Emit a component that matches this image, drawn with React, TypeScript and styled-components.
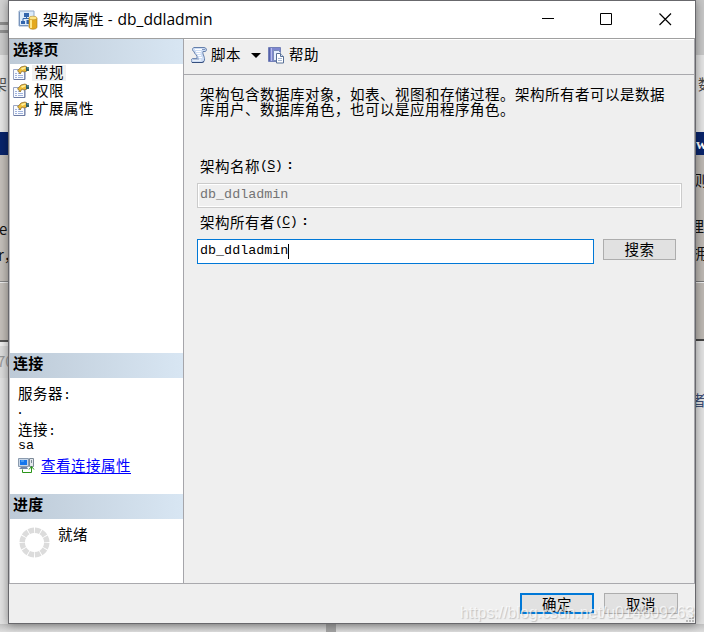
import React from 'react';
import styled, { createGlobalStyle } from 'styled-components';

const Global = createGlobalStyle`
  *{box-sizing:border-box}
  html,body{margin:0;padding:0;overflow:hidden}
  body{font:15px/18px "Liberation Mono","Noto Sans CJK SC",sans-serif;color:#000}
`;
const cjk = '"Noto Sans CJK SC",sans-serif';

const Desktop = styled.div`
  position:relative;width:704px;height:632px;overflow:hidden;background:#e7e7e7;
  display:grid;grid-template-columns:8px 688px 8px;grid-template-rows:624px 8px;
`;
const Edge = styled.div`display:flex;flex-direction:column;overflow:hidden;background:#e2e2e2;`;
const Band = styled.div<{ h: number; bg: string; shift?: number; top?: number; fg?: string }>`
  flex:none;height:${p => p.h}px;background:${p => p.bg};color:${p => p.fg || '#111'};
  font:15px/18px ${cjk};white-space:nowrap;overflow:hidden;
  padding-top:${p => p.top || 0}px;text-indent:${p => p.shift || 0}px;
`;
const BoldBand = styled(Band)`font:700 15px/18px "Liberation Serif",serif;`;
const Bottom = styled.div`
  grid-column:1 / 4;background:linear-gradient(#c4c4c4,#dedede);display:flex;padding-left:326px;
`;
const Divider = styled.div`width:10px;background:#a3a3a3;`;
const Window = styled.section`
  display:flex;flex-direction:column;border:1px solid #68686c;background:#efefef;
  box-shadow:0 1px 9px rgba(0,0,0,.42);z-index:1;
`;
const TitleBar = styled.header`
  height:38px;flex:none;background:#fff;border-bottom:1px solid #a0a0a0;display:flex;align-items:center;
  padding-left:9px;
`;
const Title = styled.h1`
  margin:0 0 2px 5px;font:400 15.2px/20px "Open Sans","Noto Sans CJK SC",sans-serif;flex:1;white-space:nowrap;
  span{font-size:15.6px;margin-left:1px}
`;
const Caption = styled.div`display:flex;width:176px;height:37px;`;
const CaptionButton = styled.button`
  border:0;background:none;padding:0;width:58.6px;display:flex;align-items:center;justify-content:center;
`;
const Body = styled.main`
  height:545px;flex:none;display:flex;border-bottom:1px solid #a9a9ad;
`;
const Side = styled.aside`
  width:175px;flex:none;background:#fff;border-right:1px solid #a5a5aa;border-left:1px solid #c0c0c4;
  display:flex;flex-direction:column;
`;
const SideTitle = styled.h2`
  height:25px;flex:none;margin:0;padding-left:3px;font:700 15px/20px ${cjk};letter-spacing:.3px;
  background:linear-gradient(90deg,#bdcad7,#d8e6f3);
`;
const Pages = styled.nav`height:289px;flex:none;padding:0 0 0 3px;`;
const PageItem = styled.div<{ active?: boolean }>`
  display:flex;align-items:center;height:18px;font:400 14.5px/14px ${cjk};letter-spacing:.5px;
  span{background:${p => (p.active ? '#f0f0f0' : 'transparent')};padding:0 2px;margin-left:3px;height:16px}
`;
const Connection = styled.div`
  height:116px;flex:none;padding:6px 0 0 8px;display:flex;flex-direction:column;
`;
const Line = styled.div<{ h?: number }>`
  height:${p => p.h || 18}px;font:13.4px/${p => p.h || 18}px "Liberation Mono",monospace;
  span{font:14.5px/18px ${cjk};letter-spacing:.5px}
`;
const Server = styled(Line)`margin-left:-2px;`;
const LinkRow = styled.div`display:flex;align-items:center;height:20px;margin-top:3px;`;
const Link = styled.a`
  margin:-3px 0 0 6px;color:#00f;font:14.5px/18px ${cjk};letter-spacing:.5px;
  text-decoration:underline;text-underline-offset:2px;text-decoration-thickness:1px;
`;
const Progress = styled.div`
  display:flex;padding:6px 0 0 9px;font:14.5px/17px ${cjk};letter-spacing:.5px;gap:8px;
  svg{margin-top:2px}
`;
const Content = styled.div`flex:1;display:flex;flex-direction:column;border-right:1px solid #a5a5aa;`;
const Toolbar = styled.div`
  height:36px;flex:none;border-top:1px solid #fff;border-bottom:1px solid #a9a9ad;display:flex;align-items:center;
  padding:0 0 4px 7px;font:14.5px/18px ${cjk};letter-spacing:.5px;
`;
const ToolLabel = styled.span`margin:-2px 0 0 4px;`;
const Caret = styled.i`
  border:5px solid transparent;border-top-color:#000;border-bottom:0;margin:1px 7px 0 10px;
`;
const Form = styled.div`padding:11px 12px 0 13px;display:flex;flex-direction:column;`;
const Intro = styled.p`
  margin:0 0 0 3px;height:61px;font:14.5px/15px ${cjk};letter-spacing:.5px;white-space:nowrap;
`;
const Label = styled.div<{ h: number }>`
  display:flex;align-items:center;height:${p => p.h}px;padding:${p => (p.h > 31 ? 2 : 0)}px 0 ${p => (p.h > 31 ? 0 : 3)}px 3px;
  font:14.5px/18px ${cjk};letter-spacing:.5px;
  u{text-underline-offset:2px;text-decoration-thickness:1px}
  u,b,i{font:13.4px/18px "Liberation Mono",monospace;letter-spacing:-.7px}
  i{font-weight:700;margin-left:4px}
`;
const Field = styled.div<{ off?: boolean }>`
  height:25px;width:${p => (p.off ? '485px' : '397px')};
  border:1px solid ${p => (p.off ? '#cbcbcb' : '#0078d7')};
  box-shadow:${p => (p.off ? 'inset 0 0 0 1px #fff' : 'none')};
  background:${p => (p.off ? '#efefef' : '#fff')};color:${p => (p.off ? '#747474' : '#000')};
  display:flex;align-items:center;padding:0 0 1px 2px;
  font:13.4px/20px "Liberation Mono",monospace;
`;
const Cursor = styled.i`width:1px;height:15px;background:#000;`;
const OwnerRow = styled.div`display:flex;gap:9px;`;
const Button = styled.button<{ w: number; primary?: boolean }>`
  width:${p => p.w}px;height:21px;padding:0 0 1px;background:#e1e1e1;
  border:${p => (p.primary ? '2px solid #0078d7' : '1px solid #adadad')};
  font:14.5px/16px ${cjk};letter-spacing:.5px;color:#000;display:flex;align-items:center;justify-content:center;
`;
const Footer = styled.footer`
  flex:1;display:flex;gap:10px;justify-content:flex-end;padding:9px 17px 0 0;
  button{padding:1px 0 0}
`;
const Watermark = styled.div`
  position:absolute;z-index:3;left:460px;top:603px;font:15.85px/20px "Liberation Sans",sans-serif;white-space:nowrap;
  color:rgba(255,255,255,.7);text-shadow:1px 1px 1px rgba(120,120,120,.38);
`;
const Grip = styled.svg`position:absolute;z-index:2;left:685px;top:613px;`;

const AppIcon = () => (
  <svg width="20" height="20" viewBox="0 0 20 20">
    <path d="M1 1h15v15H1z" fill="#dcebfa" stroke="#91a9c8" />
    <path d="M1.500 2v13.500H10" stroke="#7894bc" fill="none" />
    <path d="M6 3h5v4H6zM3 11h4v3H3zM8.500 10h3v4h-3z" fill="#3265ad" />
    <path d="M8.500 7v2M5 11V8.500h6" stroke="#3265ad" fill="none" />
    <path d="M11 8v9c0 3 8 3 8 0V8z" fill="#e4a91e" stroke="#a67a1b" strokeWidth=".6" />
    <path d="M13 9v9" stroke="#ffe88a" strokeWidth="2" />
    <ellipse cx="15" cy="8" rx="4" ry="1.800" fill="#ffe688" stroke="#bd8e26" strokeWidth=".6" />
  </svg>
);
const PageIcon = () => (
  <svg width="16" height="16" viewBox="0 0 16 16">
    <path d="M.5 4.500h11v10H.5z" fill="#f9fbff" stroke="#9aa6c4" />
    <path d="M1 14.500h11V7" fill="none" stroke="#6d7ba3" />
    <path d="M2 8.500h2m1 0h3M2 10.500h2m1 0h5M2 12.500h2m1 0h5" stroke="#9fb2dc" />
    <path d="M4.500 6L8 2l4-1 2 1v4l-3 1-2-1-2 3-1-2z" fill="#eebc35" stroke="#8e7030" strokeWidth=".8" />
    <path d="M8 3l4-1 1 1-4 2z" fill="#fff09c" />
    <path d="M13 2h3v4h-3z" fill="#315f69" /><path d="M14 3h2" stroke="#75a5a8" />
  </svg>
);
const ScriptIcon = () => (
  <svg width="16" height="16" viewBox="0 0 16 16">
    <path d="M3 .5h10c3 0 3 4 1 4h-2c-1 3 3 6 1 10-1 1-2 1-3 1H2c-3 0-2-4 0-4h4C7 8 3 7 3 4.500 1 4 1 1 3 .5z" fill="#cfdef5" stroke="#647eaa" />
    <path d="M4 2.500h7M5 4.500h5M5.500 6.500h4M7 8.500h3M8 10.500h3M2 13h8" stroke="#fff" />
    <path d="M2 12h6M11 2.500h3" stroke="#7f96be" />
    <path d="M1 15.500h10l2-1" stroke="#344e7d" fill="none" />
  </svg>
);
const HelpIcon = () => (
  <svg width="17" height="17" viewBox="0 0 17 17">
    <path d="M.5.5h12v14H.5z" fill="#7d86cf" stroke="#7380b8" />
    <path d="M1.500 1v13" stroke="#5662aa" /><path d="M3.500 1v13" stroke="#b6bee9" />
    <path d="M5.500 3.500h5l2 2v8h-7z" fill="#e7efff" stroke="#7b8eb7" />
    <path d="M8.500 6.500h4l3 3v6.500h-7z" fill="#fff" stroke="#587096" />
    <path d="M12.500 6.500v3h3" fill="#d3def1" stroke="#587096" />
    <path d="M10 11.500h4m-4 2h4" stroke="#a6b7d3" />
  </svg>
);
const ConnectionIcon = () => (
  <svg width="17" height="17" viewBox="0 0 17 17">
    <path d="M.5.5h10v8H.5z" fill="#c9d7e8" stroke="#8b9bae" />
    <path d="M2 2h7v5H2z" fill="#1576ed" /><path d="M3 3h3" stroke="#76c0ff" />
    <path d="M3 9h6l1 2H1z" fill="#7187a8" />
    <path d="M11.500.5h4v8h-4z" fill="#e4e8ec" stroke="#7c8997" /><path d="M13.500 2v3" stroke="#7c8997" />
    <path d="M4.500 11.500v3h9V9M11 11.500l2.500-3 2.500 3" fill="none" stroke="#2a9519" />
  </svg>
);
const Spinner = () => (
  <svg width="31" height="31" viewBox="0 0 31 31">
    <circle cx="15.500" cy="15.500" r="12.300" fill="none" stroke="#dcdcdc" strokeWidth="5.400" pathLength="120" strokeDasharray="8.600 1.400" strokeDashoffset="-0.700" />
  </svg>
);

export default function App() {
  return (
    <Desktop>
      <Global />
      <Edge>
        <Band h={22} bg="#d2d2d2" /><Band h={3} bg="#8d8d8d" /><Band h={5} bg="#cecece" /><Band h={3} bg="#919191" />
        <Band h={22} bg="#cbcbcb" /><Band h={77} bg="#e6e6e6" top={20} shift={-8} fg="#555">架</Band>
        <Band h={23} bg="#09246b" />
        <Band h={65} bg="#c4bfba" /><Band h={26} bg="#c4bfba" shift={-1}>e</Band>
        <Band h={35} bg="#c4bfba" shift={-2}>r，</Band><Band h={1} bg="#888" />
        <Band h={1} bg="#eee" /><Band h={57} bg="#c4bfba" /><Band h={2} bg="#555" />
        <Band h={4} bg="#eee" /><Band h={32} bg="#dcdcdc" top={6} shift={-3} fg="#999">70</Band>
      </Edge>
      <Window>
        <TitleBar>
          <AppIcon /><Title>架构属性 - <span>db_ddladmin</span></Title>
          <Caption>
            <CaptionButton aria-label="最小化"><svg width="13" height="13"><path d="M0 5.500h12" stroke="#000" /></svg></CaptionButton>
            <CaptionButton aria-label="最大化"><svg width="13" height="13"><path d="M.5.5h11v11H.5z" stroke="#000" fill="none" /></svg></CaptionButton>
            <CaptionButton aria-label="关闭"><svg width="13" height="13"><path d="M.5.5L12 12m0-11.500L.5 12" stroke="#000" strokeWidth="1.200" /></svg></CaptionButton>
          </Caption>
        </TitleBar>
        <Body>
          <Side>
            <SideTitle>选择页</SideTitle>
            <Pages>
              <PageItem active><PageIcon /><span>常规</span></PageItem>
              <PageItem><PageIcon /><span>权限</span></PageItem>
              <PageItem><PageIcon /><span>扩展属性</span></PageItem>
            </Pages>
            <SideTitle>连接</SideTitle>
            <Connection>
              <Line><span>服务器</span>:</Line><Server>.</Server>
              <Line><span>连接</span>:</Line><Line h={15}>sa</Line>
              <LinkRow><ConnectionIcon /><Link>查看连接属性</Link></LinkRow>
            </Connection>
            <SideTitle>进度</SideTitle>
            <Progress><Spinner />就绪</Progress>
          </Side>
          <Content>
            <Toolbar>
              <ScriptIcon /><ToolLabel>脚本</ToolLabel><Caret /><HelpIcon /><ToolLabel>帮助</ToolLabel>
            </Toolbar>
            <Form>
              <Intro>架构包含数据库对象，如表、视图和存储过程。架构所有者可以是数据<br />库用户、数据库角色，也可以是应用程序角色。</Intro>
              <Label h={36}>架构名称<b>(</b><u>S</u><b>)</b><i>:</i></Label>
              <Field off>db_ddladmin</Field>
              <Label h={31}>架构所有者<b>(</b><u>C</u><b>)</b><i>:</i></Label>
              <OwnerRow><Field>db_ddladmin<Cursor /></Field><Button w={73}>搜索</Button></OwnerRow>
            </Form>
          </Content>
        </Body>
        <Footer><Button w={74} primary>确定</Button><Button w={74}>取消</Button></Footer>
      </Window>
      <Edge>
        <Band h={55} bg="#c7c7c7" /><Band h={77} bg="#e4e4e4" top={20} shift={2} fg="#444">数</Band>
        <BoldBand h={23} bg="#09246b" fg="#fff" top={3}>w</BoldBand>
        <Band h={62} bg="#bdb8b3" top={16} shift={-3}>则</Band>
        <Band h={27} bg="#bdb8b3" shift={-7}>理</Band><Band h={37} bg="#bdb8b3" shift={-4}>拥</Band>
        <Band h={1} bg="#777" /><Band h={1} bg="#eee" /><Band h={56} bg="#bdb8b3" /><Band h={2} bg="#444" />
        <Band h={290} bg="#e2e2e2" top={50} shift={-5} fg="#3d4e75">者</Band>
      </Edge>
      <Bottom><Divider /></Bottom>
      <Grip width="10" height="10"><path d="M7 1h2v2H7zM4 4h2v2H4zM7 4h2v2H7zM1 7h2v2H1zM4 7h2v2H4zM7 7h2v2H7z" fill="#b9b9b9" /></Grip>
      <Watermark>https://blog.csdn.net/u014609263</Watermark>
    </Desktop>
  );
}
